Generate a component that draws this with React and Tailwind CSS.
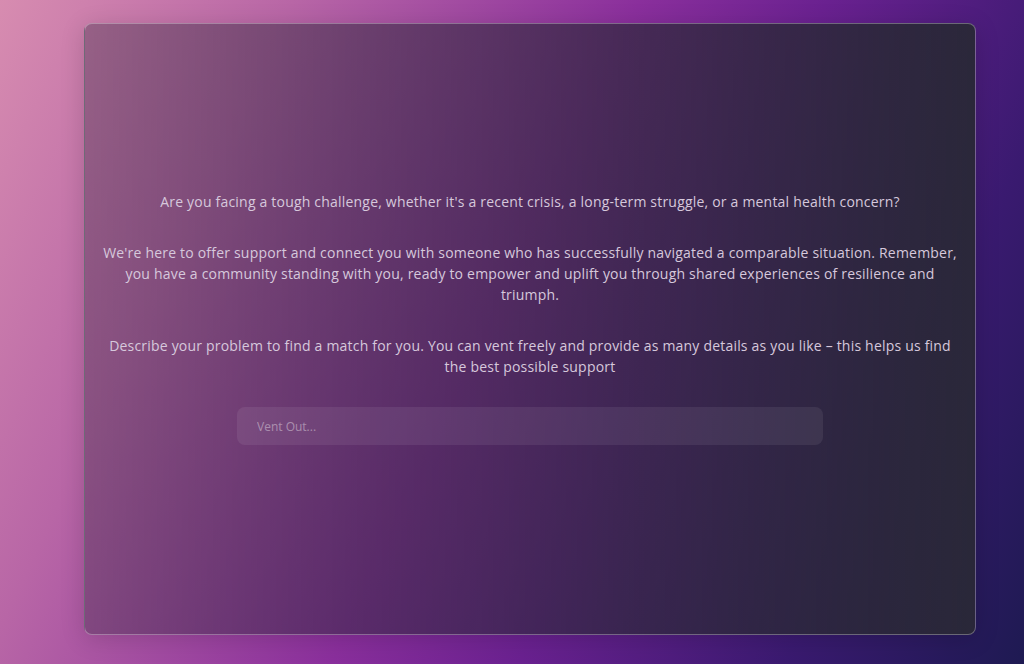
import React from 'react'

export default function App() {
  return (
    <div className="min-h-screen w-full bg-[linear-gradient(115deg,#d78cb0_0%,#b866a6_22%,#8a2f9c_48%,#6a2190_62%,#3a1a70_82%,#1e1a52_100%)] pl-[84px] pr-[48px] pt-[23px] pb-[30px]" style={{ fontFamily: '"Open Sans", "Liberation Sans", sans-serif' }}>
      <div className="h-[612px] w-full rounded-lg border border-white/30 bg-[linear-gradient(to_right,rgba(50,40,62,0.35)_0%,rgba(46,40,60,0.6)_45%,rgba(42,40,56,0.97)_100%)] shadow-[0_4px_24px_rgba(0,0,0,0.15)] flex flex-col items-center px-4 pt-[167px]">
        <div className="text-center text-[14px] leading-[21px] tracking-[0.2px] text-[#d6c8dc] space-y-[30px]">
          <p>Are you facing a tough challenge, whether it's a recent crisis, a long-term struggle, or a mental health concern?</p>
          <p>We're here to offer support and connect you with someone who has successfully navigated a comparable situation. Remember, you have a community standing with you, ready to empower and uplift you through shared experiences of resilience and triumph.</p>
          <p>Describe your problem to find a match for you. You can vent freely and provide as many details as you like – this helps us find the best possible support</p>
        </div>
        <input
          autoFocus
          type="text"
          placeholder="Vent Out..."
          className="mt-[30px] w-[586px] h-[38px] rounded-lg bg-white/[0.07] px-5 text-[12px] text-white/80 placeholder:text-white/40 caret-[#3b82f6] outline-none"
        />
      </div>
    </div>
  )
}
